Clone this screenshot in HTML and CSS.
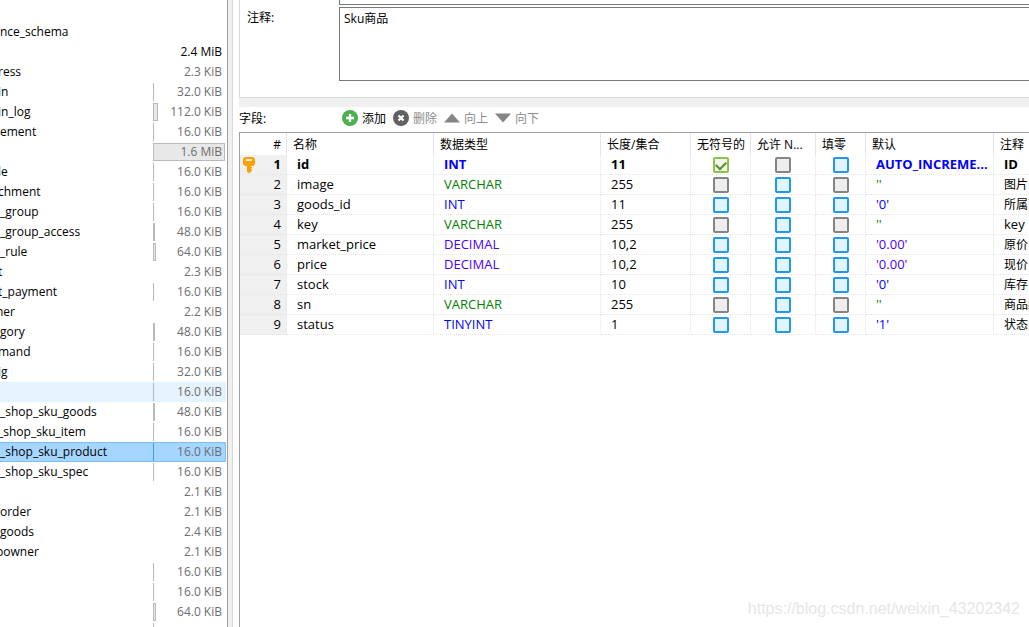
FILE: index.html
```html
<!DOCTYPE html>
<html lang="zh-CN">
<head>
  <meta charset="UTF-8">
  <title>shop_sku_product</title>
  <link rel="stylesheet" href="styles.css">
</head>
<body>
  <div class="sidebar">
    <table class="tree">
      <tbody>
        <tr><td></td><td></td></tr>
        <tr><td>nce_schema</td><td></td></tr>
        <tr class="db"><td></td><td>2.4 MiB</td></tr>
        <tr><td class="cut">ress</td><td>2.3 KiB</td></tr>
        <tr><td class="cut">in</td><td><i class="bar" style="width:1px"></i><span>32.0 KiB</span></td></tr>
        <tr><td class="cut">in_log</td><td><i class="bar" style="width:5px"></i><span>112.0 KiB</span></td></tr>
        <tr><td>ement</td><td><i class="bar" style="width:1px"></i><span>16.0 KiB</span></td></tr>
        <tr><td></td><td><i class="bar" style="width:72px"></i><span>1.6 MiB</span></td></tr>
        <tr><td class="cut">le</td><td><i class="bar" style="width:1px"></i><span>16.0 KiB</span></td></tr>
        <tr><td class="cut">chment</td><td><i class="bar" style="width:1px"></i><span>16.0 KiB</span></td></tr>
        <tr><td>_group</td><td><i class="bar" style="width:1px"></i><span>16.0 KiB</span></td></tr>
        <tr><td>_group_access</td><td><i class="bar" style="width:2px"></i><span>48.0 KiB</span></td></tr>
        <tr><td>_rule</td><td><i class="bar" style="width:3px"></i><span>64.0 KiB</span></td></tr>
        <tr><td class="cut">t</td><td>2.3 KiB</td></tr>
        <tr><td class="cut">t_payment</td><td><i class="bar" style="width:1px"></i><span>16.0 KiB</span></td></tr>
        <tr><td class="cut wide">ner</td><td>2.2 KiB</td></tr>
        <tr><td>gory</td><td><i class="bar" style="width:2px"></i><span>48.0 KiB</span></td></tr>
        <tr><td class="cut">mand</td><td><i class="bar" style="width:1px"></i><span>16.0 KiB</span></td></tr>
        <tr><td class="cut">ig</td><td><i class="bar" style="width:1px"></i><span>32.0 KiB</span></td></tr>
        <tr class="hot"><td></td><td><i class="bar" style="width:1px"></i><span>16.0 KiB</span></td></tr>
        <tr><td>_shop_sku_goods</td><td><i class="bar" style="width:2px"></i><span>48.0 KiB</span></td></tr>
        <tr><td class="cut">_shop_sku_item</td><td><i class="bar" style="width:1px"></i><span>16.0 KiB</span></td></tr>
        <tr class="selected"><td>_shop_sku_product</td><td><i class="bar" style="width:1px"></i><span>16.0 KiB</span></td></tr>
        <tr><td>_shop_sku_spec</td><td><i class="bar" style="width:1px"></i><span>16.0 KiB</span></td></tr>
        <tr><td></td><td>2.1 KiB</td></tr>
        <tr><td>order</td><td>2.1 KiB</td></tr>
        <tr><td>goods</td><td>2.4 KiB</td></tr>
        <tr><td class="cut wide">powner</td><td>2.1 KiB</td></tr>
        <tr><td></td><td><i class="bar" style="width:1px"></i><span>16.0 KiB</span></td></tr>
        <tr><td></td><td><i class="bar" style="width:1px"></i><span>16.0 KiB</span></td></tr>
        <tr><td></td><td><i class="bar" style="width:3px"></i><span>64.0 KiB</span></td></tr>
        <tr><td></td><td><i class="bar" style="width:1px"></i><span>16.0 KiB</span></td></tr>
      </tbody>
    </table>
  </div>

  <div class="splitter"></div>

  <div class="main">
    <div class="options">
      <div class="name-edge"></div>
      <label for="comment">注释:</label>
      <textarea id="comment" spellcheck="false">Sku商品</textarea>
    </div>

    <div class="toolbar">
      <span class="title">字段:</span>
      <button type="button">
        <svg width="16" height="16" viewBox="0 0 16 16"><circle cx="8" cy="8" r="8" fill="#4caf50"/><path d="M8 4v8M4 8h8" stroke="#fff" stroke-width="2.4"/></svg>
        添加
      </button>
      <button type="button" disabled>
        <svg width="16" height="16" viewBox="0 0 16 16"><circle cx="8" cy="8" r="8" fill="#616161"/><path d="M5.500 5.500l5 5M10.500 5.500l-5 5" stroke="#fff" stroke-width="2.2"/></svg>
        删除
      </button>
      <button type="button" disabled>
        <svg width="16" height="16" viewBox="0 0 16 16"><path d="M8 3.500L16 12.500H0z" fill="#858585"/></svg>
        向上
      </button>
      <button type="button" disabled>
        <svg width="16" height="16" viewBox="0 0 16 16"><path d="M0 3.500H16L8 12.500z" fill="#858585"/></svg>
        向下
      </button>
    </div>

    <div class="grid">
      <table class="columns">
        <colgroup>
          <col class="c-num"><col class="c-name"><col class="c-type"><col class="c-len">
          <col class="c-unsigned"><col class="c-null"><col class="c-zero"><col class="c-default"><col class="c-comment">
        </colgroup>
        <thead>
          <tr>
            <th>#</th><th>名称</th><th>数据类型</th><th>长度/集合</th><th>无符号的</th><th>允许 N...</th><th>填零</th><th>默认</th><th>注释</th>
          </tr>
        </thead>
        <tbody>
          <tr class="primary">
            <td><svg class="key" width="12" height="16" viewBox="0 0 12 16"><path fill="#ffa000" fill-rule="evenodd" d="M3 0h6Q12 0 12 3v3Q12 9 9 9H8v6L6.500 16h-1L4 15V9H3Q0 9 0 6V3Q0 0 3 0zM3 2v2h6V2z"/><path fill="#ffa000" d="M8 10h1v1.500H8zM8 12.500h1V14H8z"/></svg>1</td>
            <td>id</td><td class="int">INT</td><td>11</td>
            <td><input type="checkbox" aria-label="无符号的" checked></td><td><input type="checkbox" aria-label="允许 NULL" disabled></td><td><input type="checkbox" aria-label="填零"></td>
            <td class="int">AUTO_INCREME...</td><td>ID</td>
          </tr>
          <tr>
            <td>2</td><td>image</td><td class="text">VARCHAR</td><td>255</td>
            <td><input type="checkbox" aria-label="无符号的" disabled></td><td><input type="checkbox" aria-label="允许 NULL"></td><td><input type="checkbox" aria-label="填零" disabled></td>
            <td class="text">''</td><td class="cn">图片</td>
          </tr>
          <tr>
            <td>3</td><td>goods_id</td><td class="int">INT</td><td>11</td>
            <td><input type="checkbox" aria-label="无符号的"></td><td><input type="checkbox" aria-label="允许 NULL"></td><td><input type="checkbox" aria-label="填零"></td>
            <td class="int">'0'</td><td class="cn">所属商品</td>
          </tr>
          <tr>
            <td>4</td><td>key</td><td class="text">VARCHAR</td><td>255</td>
            <td><input type="checkbox" aria-label="无符号的" disabled></td><td><input type="checkbox" aria-label="允许 NULL"></td><td><input type="checkbox" aria-label="填零" disabled></td>
            <td class="text">''</td><td>key</td>
          </tr>
          <tr>
            <td>5</td><td>market_price</td><td class="real">DECIMAL</td><td>10,2</td>
            <td><input type="checkbox" aria-label="无符号的"></td><td><input type="checkbox" aria-label="允许 NULL"></td><td><input type="checkbox" aria-label="填零"></td>
            <td class="real">'0.00'</td><td class="cn">原价</td>
          </tr>
          <tr>
            <td>6</td><td>price</td><td class="real">DECIMAL</td><td>10,2</td>
            <td><input type="checkbox" aria-label="无符号的"></td><td><input type="checkbox" aria-label="允许 NULL"></td><td><input type="checkbox" aria-label="填零"></td>
            <td class="real">'0.00'</td><td class="cn">现价</td>
          </tr>
          <tr>
            <td>7</td><td>stock</td><td class="int">INT</td><td>10</td>
            <td><input type="checkbox" aria-label="无符号的"></td><td><input type="checkbox" aria-label="允许 NULL"></td><td><input type="checkbox" aria-label="填零"></td>
            <td class="int">'0'</td><td class="cn">库存</td>
          </tr>
          <tr>
            <td>8</td><td>sn</td><td class="text">VARCHAR</td><td>255</td>
            <td><input type="checkbox" aria-label="无符号的" disabled></td><td><input type="checkbox" aria-label="允许 NULL"></td><td><input type="checkbox" aria-label="填零" disabled></td>
            <td class="text">''</td><td class="cn">商品编号</td>
          </tr>
          <tr>
            <td>9</td><td>status</td><td class="int">TINYINT</td><td>1</td>
            <td><input type="checkbox" aria-label="无符号的"></td><td><input type="checkbox" aria-label="允许 NULL"></td><td><input type="checkbox" aria-label="填零"></td>
            <td class="int">'1'</td><td class="cn">状态</td>
          </tr>
        </tbody>
      </table>
    </div>
  </div>

  <div class="watermark">https://blog.csdn.net/weixin_43202342</div>
</body>
</html>
```
FILE: styles.css
```css
* {
  box-sizing: border-box;
}
body {
  margin: 0;
  height: 100vh;
  display: flex;
  overflow: hidden;
  background: #fff;
  color: #000;
  font-family: "Open Sans", "Noto Sans CJK SC", sans-serif;
  font-size: 12px;
}
table {
  border-collapse: separate;
  border-spacing: 0;
  table-layout: fixed;
}
td, th {
  padding: 0;
  white-space: nowrap;
  overflow: hidden;
}

/* database tree */
.sidebar {
  flex: 0 0 228px;
  padding: 2px 1px 0 0;
  border-right: 1px solid #a0a0a0;
  overflow: hidden;
}
.tree {
  width: 226px;
}
.tree td {
  height: 20px;
  line-height: 18px;
  border: solid transparent;
  border-width: 1px 0;
}
.tree td:last-child {
  position: relative;
  width: 73px;
  padding-right: 4px;
  color: #6d6d6d;
  text-align: right;
}
.tree td.cut {
  text-indent: -2px;
}
.tree td.wide {
  text-indent: -4px;
}
.tree .db td:last-child {
  color: #000;
}
.tree span {
  position: relative;
}
.bar {
  position: absolute;
  left: 0;
  top: 0;
  height: 18px;
  background: #e8e8e8;
  box-shadow: inset 0 0 0 1px #b9b9b9;
}
.hot td {
  background: #e5f3ff;
}
.hot .bar {
  box-shadow: inset 0 0 0 1px #a9b8c4;
}
.tree .selected td {
  background: #a5d6ff;
  border-color: #7abfff;
}
.tree .selected td:last-child {
  border-right: 1px solid #7abfff;
  padding-right: 3px;
}
.selected .bar {
  box-shadow: inset 0 0 0 1px #3b9df0;
}

.splitter {
  flex: 0 0 5px;
  background: #f0f0f0;
  border-right: 1px solid #d9d9d9;
  cursor: col-resize;
}

/* table editor */
.main {
  flex: 1;
  min-width: 0;
  display: flex;
  flex-direction: column;
  padding-left: 6px;
}
.options {
  display: grid;
  grid-template-columns: 92px 1fr;
  row-gap: 2px;
  padding: 0 0 16px 7px;
  border-left: 1px solid #d9d9d9;
  border-bottom: 1px solid #d9d9d9;
}
.name-edge {
  grid-column: 2;
  height: 5px;
  border: solid #7a7a7a;
  border-width: 0 0 1px 1px;
}
.options label {
  line-height: 18px;
  padding-top: 2px;
}
textarea {
  height: 74px;
  padding: 2px 4px;
  border: 1px solid #7a7a7a;
  border-right: none;
  resize: none;
  outline: none;
  font: inherit;
  line-height: 18px;
}
.toolbar {
  display: flex;
  align-items: center;
  height: 34px;
  padding-bottom: 4px;
  border-top: 9px solid #f0f0f0;
}
.toolbar .title {
  width: 103px;
}
.toolbar button {
  display: flex;
  align-items: center;
  gap: 4px;
  margin-right: 7px;
  padding: 0;
  border: none;
  background: none;
  font: inherit;
  color: #000;
}
.toolbar button:disabled {
  color: #8c8c8c;
}
.grid {
  flex: 1;
  min-height: 0;
  border: solid #a0a0a0;
  border-width: 1px 0 0 1px;
  overflow: hidden;
}
.columns {
  width: 100%;
}
.c-num { width: 47px; }
.c-name { width: 147px; }
.c-type { width: 167px; }
.c-len { width: 90px; }
.c-unsigned { width: 60px; }
.c-null { width: 65px; }
.c-zero { width: 50px; }
.c-default { width: 128px; }
.columns th {
  height: 22px;
  padding: 2px 0 0 6px;
  border-right: 1px solid #e5e5e5;
  font-weight: normal;
  line-height: 20px;
  text-align: left;
}
.columns td {
  height: 20px;
  padding-left: 10px;
  border: dotted #e6e6e6;
  border-width: 0 1px 1px 0;
  line-height: 19px;
  font-size: 13px;
}
.columns th:first-child,
.columns td:first-child {
  padding-left: 2px;
  padding-right: 5px;
  text-align: right;
}
.columns td:first-child {
  background: #f0f0f0;
}
.columns td:has(input) {
  padding: 0;
  text-align: center;
}
.columns th:last-child,
.columns td:last-child {
  border-right: none;
}
.columns td.cn {
  font-size: 12px;
}
.primary td {
  font-weight: bold;
}
.key {
  float: left;
  margin: 2px 0 0 1px;
}
.columns .int { color: #00f; }
.columns .real { color: #4800ff; }
.columns .text { color: #008000; }

input[type="checkbox"] {
  appearance: none;
  display: block;
  width: 16px;
  height: 16px;
  margin: 1px auto 0;
  border: 2px solid #2196f3;
  border-radius: 2px;
  background: #e1f5fe;
}
input[type="checkbox"]:disabled {
  border-color: #848484;
  background: #eee;
}
input[type="checkbox"]:checked {
  border-color: #8bc34a;
  background: #f1f8e9;
}
input[type="checkbox"]:checked::before {
  content: "";
  display: block;
  width: 8px;
  height: 5px;
  margin: 2px auto 0;
  border: solid #558b2f;
  border-width: 0 0 2px 2px;
  transform: rotate(-45deg);
}

.watermark {
  position: absolute;
  right: 9px;
  bottom: 8px;
  color: #e6e6e6;
  font: 16px/20px "Liberation Sans", sans-serif;
}
```
